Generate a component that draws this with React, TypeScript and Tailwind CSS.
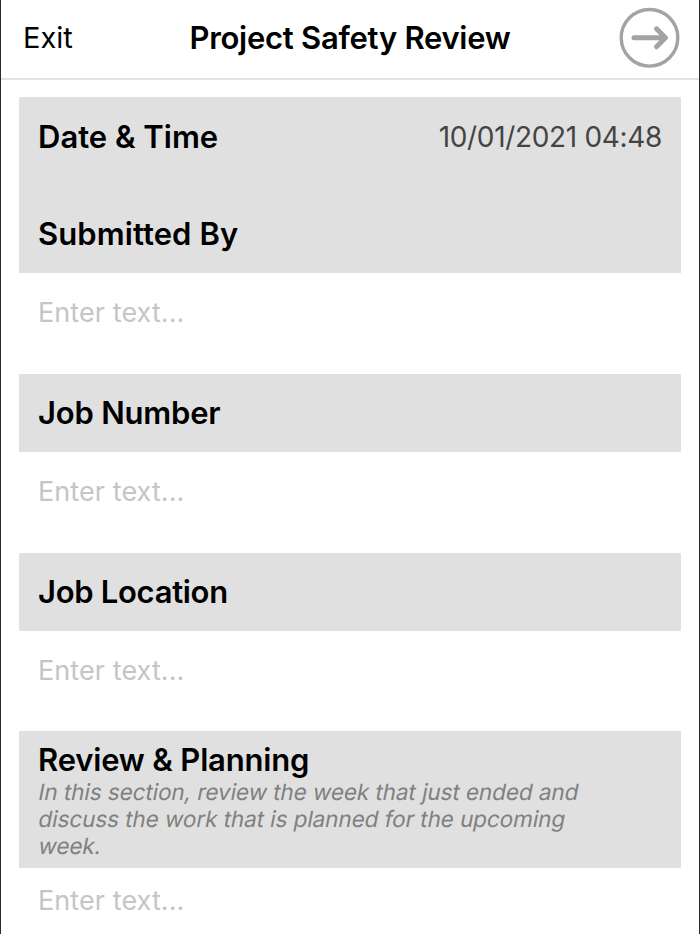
import type { ReactNode } from "react";

interface TitleProps {
  children: ReactNode;
  className?: string;
}

interface SectionProps {
  title: string;
  titleClassName?: string;
  note?: string[];
  className?: string;
}

const REVIEW_NOTE = [
  "In this section, review the week that just ended and",
  "discuss the work that is planned for the upcoming",
  "week.",
];

function ExitButton() {
  return (
    <button type="button" className="w-[120px] pl-[22px] text-left text-[29px] leading-9">
      Exit
    </button>
  );
}

function NextButton() {
  return (
    <button type="button" aria-label="Next" className="flex w-[120px] justify-end pr-[18px]">
      <svg width="62" height="62" viewBox="0 0 62 62" fill="none" stroke="#a3a3a3">
        <circle cx="30.5" cy="30.8" r="28.3" strokeWidth="3.4" />
        <path d="M15 30.8H46" strokeWidth="5" strokeLinecap="round" />
        <path
          d="M37.5 21.8L46.4 30.8L37.5 39.8"
          strokeWidth="5"
          strokeLinecap="round"
          strokeLinejoin="round"
        />
      </svg>
    </button>
  );
}

function Title({ children, className = "" }: TitleProps) {
  return <h2 className={`text-[31px] leading-9 font-semibold ${className}`}>{children}</h2>;
}

function Section({ title, titleClassName, note, className = "h-[78px]" }: SectionProps) {
  return (
    <div className={`flex flex-col justify-center bg-[#e0e0e0] px-[19px] ${className}`}>
      <Title className={titleClassName}>{title}</Title>
      {note && (
        <p className="pl-px text-[22.5px] leading-[27px] tracking-[-0.08px] text-[#808080]">
          {note.map((line) => (
            <span key={line} className="block w-fit -skew-x-[11deg] whitespace-nowrap">
              {line}
            </span>
          ))}
        </p>
      )}
    </div>
  );
}

function TextField({ className = "h-[79px]" }: { className?: string }) {
  return (
    <input
      type="text"
      placeholder="Enter text..."
      className={`block w-full bg-white px-[19px] text-[27px] tracking-[0.08px] outline-none placeholder:text-[#c5c5c5] ${className}`}
    />
  );
}

export default function App() {
  return (
    <div className="h-[934px] w-[700px] overflow-hidden border-x border-[#2b2b2d] bg-white font-['Inter',sans-serif] text-black">
      <header className="flex h-20 items-center justify-between border-b-2 border-[#e2e2e2] pb-[3px]">
        <ExitButton />
        <h1 className="pt-[2px] text-[31px] font-semibold tracking-[-0.27px] whitespace-nowrap">
          Project Safety Review
        </h1>
        <NextButton />
      </header>

      <main className="px-[18px] pt-[17px]">
        <div className="h-[175.5px] bg-[#e0e0e0] px-[19px] pt-[22px]">
          <div className="flex items-center justify-between">
            <Title>Date &amp; Time</Title>
            <span className="text-[28px] leading-9 tracking-[-0.33px] text-[#444]">
              10/01/2021 04:48
            </span>
          </div>
          <div className="pt-[61px]">
            <Title className="tracking-[0.08px]">Submitted By</Title>
          </div>
        </div>
        <TextField />
        <div className="mt-[22px]">
          <Section title="Job Number" titleClassName="tracking-[-0.2px]" />
          <TextField />
        </div>
        <div className="mt-[22px]">
          <Section title="Job Location" titleClassName="tracking-[-0.3px]" />
          <TextField />
        </div>
        <div className="mt-[21.5px]">
          <Section
            title="Review & Planning"
            titleClassName="tracking-[-0.18px]"
            note={REVIEW_NOTE}
            className="h-[137px] pt-[2px]"
          />
          <TextField className="h-[65px]" />
        </div>
      </main>
    </div>
  );
}
